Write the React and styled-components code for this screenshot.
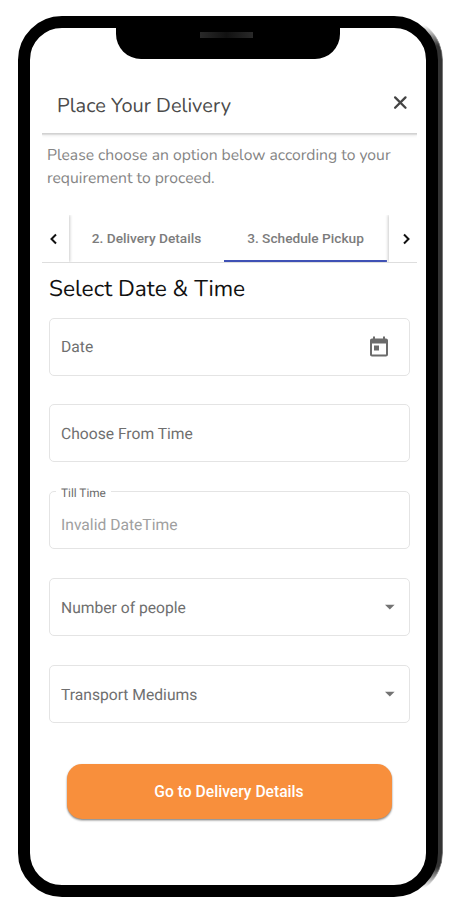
import React from "react";
import styled, { createGlobalStyle, css } from "styled-components";

const GlobalStyle = createGlobalStyle`
  *, *::before, *::after { box-sizing: border-box; }
  body { margin: 0; background: #fff; font-family: Roboto, "Liberation Sans", sans-serif; text-rendering: geometricPrecision; }
  button { font: inherit; border: 0; padding: 0; background: none; }
  svg { display: block; }
`;

const rounded = css`
  font-family: Nunito, Lato, sans-serif;
  font-weight: 400;
  margin: 0;
  white-space: nowrap;
`;

const Page = styled.div`
  width: 457px;
  height: 920px;
  padding: 16px 0 0 18px;
  overflow: hidden;
`;

const Phone = styled.div`
  position: relative;
  width: 420px;
  height: 881px;

  &::before {
    content: "";
    position: absolute;
    inset: 0 -5px 0 5px;
    border-radius: 44px;
    background: #333;
    border-right: 1px solid #777;
    mask-image: linear-gradient(transparent 9px, #000 30px, #000 851px, transparent 872px);
  }
`;

const Screen = styled.main`
  position: relative;
  height: 100%;
  border: 12px solid #000;
  border-radius: 44px;
  background: #fff;
  display: flex;
  flex-direction: column;
  padding: 0 9px 0 12px;
`;

const Notch = styled.div`
  position: absolute;
  top: -1px;
  left: 86px;
  width: 224px;
  height: 32px;
  border-radius: 0 0 25px 25px;
  background: #000;
  display: flex;
  justify-content: center;
  padding: 5px 3px 0 0;
`;

const Speaker = styled.span`
  width: 53px;
  height: 6px;
  background: linear-gradient(90deg, #292929, #111 50%, #292929);
`;

const Header = styled.header`
  display: flex;
  align-items: center;
  justify-content: space-between;
  height: 105px;
  padding: 51px 8px 0 15px;
  box-shadow: 0 1px 0 #d2d2d2, 0 2px 1px #dedede, 0 3px 3px #f0f0f0;
  clip-path: inset(0 0 -6px 0);
`;

const Title = styled.h1`
  ${rounded}
  padding-top: 1px;
  font-size: 20px;
  line-height: 26px;
  color: #4b4b4b;
`;

const CloseButton = styled.button`
  width: 17px;
  height: 16px;
  margin-top: -7px;
`;

const Intro = styled.p`
  ${rounded}
  margin: 11px 0 0 5px;
  height: 71px;
  font-size: 15.7px;
  line-height: 23.4px;
  color: #858585;
`;

const TabBar = styled.nav`
  display: flex;
  height: 48px;
  border-bottom: 1px solid #dedede;
`;

const ScrollButton = styled.button`
  display: flex;
  flex: none;
  align-items: center;
  justify-content: center;
  width: ${(p) => (p.$side === "left" ? 27 : 28)}px;
  padding-${(p) => (p.$side === "left" ? "right: 4px" : "left: 6px")};
  box-shadow: ${(p) => (p.$side === "left" ? "1px 0 3px #ccc" : "-1px 0 3px #ccc")};
  clip-path: inset(0 ${(p) => (p.$side === "left" ? "-6px 0 0" : "0 0 -6px")});
`;

const TabList = styled.div`
  display: flex;
  flex: 1;
  justify-content: flex-end;
  padding-right: 2px;
`;

const Tab = styled.button`
  flex: none;
  width: ${(p) => p.$width}px;
  height: 47px;
  border-bottom: 2px solid ${(p) => (p.$active ? "#3f51b5" : "transparent")};
  font-size: 13.7px;
  font-weight: 500;
  white-space: nowrap;
  color: #7c7c7c;
`;

const SectionTitle = styled.h2`
  ${rounded}
  margin: 9px 0 0 7px;
  height: 45.6px;
  font-size: 22.7px;
  line-height: 35px;
  color: #111;
`;

const Form = styled.form`
  display: flex;
  flex-direction: column;
  gap: 28.8px;
  margin: 0 7px;
`;

const FieldBox = styled.div`
  position: relative;
  display: flex;
  align-items: center;
  justify-content: space-between;
  height: 58px;
  padding: ${(p) => (p.$filled ? "8px" : "0.8px")} ${(p) => p.$end}px 0 11px;
  border: 1px solid #e4e4e4;
  border-radius: 5px;
  font-size: 15.65px;
  color: ${(p) => (p.$filled ? "#a0a0a0" : "#6f6f6f")};
`;

const FloatingLabel = styled.label`
  position: absolute;
  top: -7px;
  left: 6px;
  padding: 0 5px;
  background: #fff;
  font-size: 11.8px;
  line-height: 17px;
  color: #6b6b6b;
`;

const SubmitButton = styled.button`
  align-self: center;
  width: 325px;
  height: 55px;
  margin: 41px 1px 0 0;
  border-radius: 15px;
  background: #f88f3c;
  box-shadow: 0 1px 2px rgba(0, 0, 0, 0.4), 0 2px 2px rgba(0, 0, 0, 0.15);
  color: #fff;
  font-size: 15.65px;
  font-weight: 500;
`;

const CloseIcon = () => (
  <svg width="16" height="16" viewBox="0 0 16 16" fill="none" stroke="#444" strokeWidth="2.3" strokeLinecap="round">
    <path d="M3.100 2.400 13.500 12.800M13.500 2.400 3.100 12.800" />
  </svg>
);

const Chevron = ({ d }) => (
  <svg width="12" height="12" viewBox="0 0 12 12" fill="none" stroke="#111" strokeWidth="2">
    <path d={d} />
  </svg>
);

const CalendarIcon = () => (
  <svg width="24" height="24" viewBox="0 -0.5 24 24" fill="#6b6b6b">
    <path d="M19 3h-1V1h-2v2H8V1H6v2H5c-1.11 0-1.99.9-1.99 2L3 19c0 1.100.89 2 2 2h14c1.100 0 2-.9 2-2V5c0-1.100-.9-2-2-2zm0 16H5V8h14v11zM7 10h5v5H7z" />
  </svg>
);

const CaretIcon = () => (
  <svg width="10" height="6" viewBox="0 0 10 6" fill="#737373">
    <path d="M0 .7h9.600L4.800 5.500z" />
  </svg>
);

const Field = ({ label, value, icon, end = 12 }) => (
  <FieldBox $filled={Boolean(value)} $end={end}>
    {value && <FloatingLabel>{label}</FloatingLabel>}
    <span>{value || label}</span>
    {icon}
  </FieldBox>
);

export default function App() {
  return (
    <Page>
      <GlobalStyle />
      <Phone>
        <Screen>
          <Notch>
            <Speaker />
          </Notch>
          <Header>
            <Title>Place Your Delivery</Title>
            <CloseButton aria-label="Close">
              <CloseIcon />
            </CloseButton>
          </Header>
          <Intro>
            Please choose an option below according to your
            <br />
            requirement to proceed.
          </Intro>
          <TabBar>
            <ScrollButton $side="left" aria-label="Previous tab">
              <Chevron d="M8 1.500 3.500 6 8 10.500" />
            </ScrollButton>
            <TabList>
              <Tab $width={155}>2. Delivery Details</Tab>
              <Tab $width={163} $active>3. Schedule Pickup</Tab>
            </TabList>
            <ScrollButton $side="right" aria-label="Next tab">
              <Chevron d="M4 1.500 8.500 6 4 10.500" />
            </ScrollButton>
          </TabBar>
          <SectionTitle>Select Date &amp; Time</SectionTitle>
          <Form>
            <Field label="Date" icon={<CalendarIcon />} end={18} />
            <Field label="Choose From Time" />
            <Field label="Till Time" value="Invalid DateTime" />
            <Field label="Number of people" icon={<CaretIcon />} end={14} />
            <Field label="Transport Mediums" icon={<CaretIcon />} end={14} />
          </Form>
          <SubmitButton>Go to Delivery Details</SubmitButton>
        </Screen>
      </Phone>
    </Page>
  );
}
